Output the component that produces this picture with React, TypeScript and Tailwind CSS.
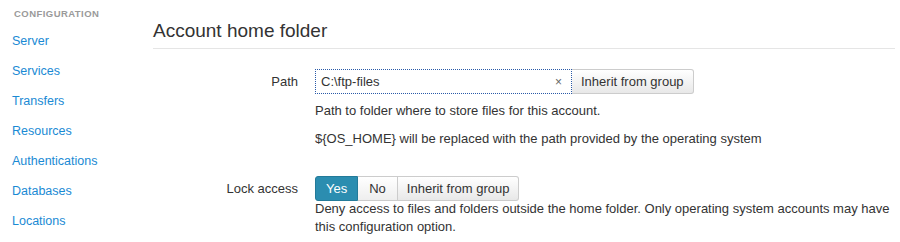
import React from "react";

const NAV = ["Server", "Services", "Transfers", "Resources", "Authentications", "Databases", "Locations"];

export default function App() {
  return (
    <div
      className="flex w-[900px] h-[242px] overflow-hidden bg-white text-[13px] text-[#333]"
      style={{ fontFamily: '"Liberation Sans", Arial, sans-serif' }}
    >
      {/* Sidebar */}
      <aside className="w-[140px] shrink-0 pt-[8px]">
        <div className="pl-[14px] text-[9.5px] font-bold leading-[11px] tracking-[0.45px] text-[#9a9a9a]">CONFIGURATION</div>
        <ul className="mt-[13px]">
          {NAV.map((n) => (
            <li key={n} className="pl-[12px] h-[30px] text-[12.5px] leading-[18px]">
              <a className="text-[#1a8ad4]">{n}</a>
            </li>
          ))}
        </ul>
      </aside>

      {/* Main */}
      <main className="flex-1 pl-[13px] pr-[5px]">
        <h2 className="pt-[20px] text-[19px] leading-[22px] text-[#333]">Account home folder</h2>
        <div className="mt-[6px] border-t border-[#e5e5e5]" />

        <div className="mt-[20px] flex">
          <label className="w-[145px] shrink-0 text-right leading-[25px]">Path</label>
          <div className="ml-[17px]">
            <div className="flex h-[25px]">
              <div className="flex w-[257px] items-center border border-dotted border-[#2a5aa8] px-[5px]">
                <span className="flex-1">C:\ftp-files</span>
                <span className="mr-[4px] text-[12px] text-[#666]">×</span>
              </div>
              <button className="h-[25px] rounded-r-[3px] border border-l-0 border-[#ccc] bg-gradient-to-b from-white to-[#e8e8e8] px-[9px] text-[13px] text-[#333]">
                Inherit from group
              </button>
            </div>
            <p className="mt-[8px] leading-[18px]">Path to folder where to store files for this account.</p>
            <p className="mt-[10px] leading-[18px]">{"${OS_HOME}"} will be replaced with the path provided by the operating system</p>
          </div>
        </div>

        <div className="mt-[28px] flex">
          <label className="w-[145px] shrink-0 text-right leading-[25px]">Lock access</label>
          <div className="ml-[17px]">
            <div className="flex h-[25px]">
              <button className="rounded-l-[3px] border border-[#237a99] bg-[#2b8db0] px-[10px] text-white">Yes</button>
              <button className="border border-l-0 border-[#ccc] bg-gradient-to-b from-white to-[#eee] px-[11px] text-[#333]">No</button>
              <button className="rounded-r-[3px] border border-l-0 border-[#ccc] bg-gradient-to-b from-white to-[#e8e8e8] px-[9px] text-[#333]">
                Inherit from group
              </button>
            </div>
            <p className="mt-[-1px] leading-[18px]">
              Deny access to files and folders outside the home folder. Only operating system accounts may have this configuration option.
            </p>
          </div>
        </div>
      </main>
    </div>
  );
}
